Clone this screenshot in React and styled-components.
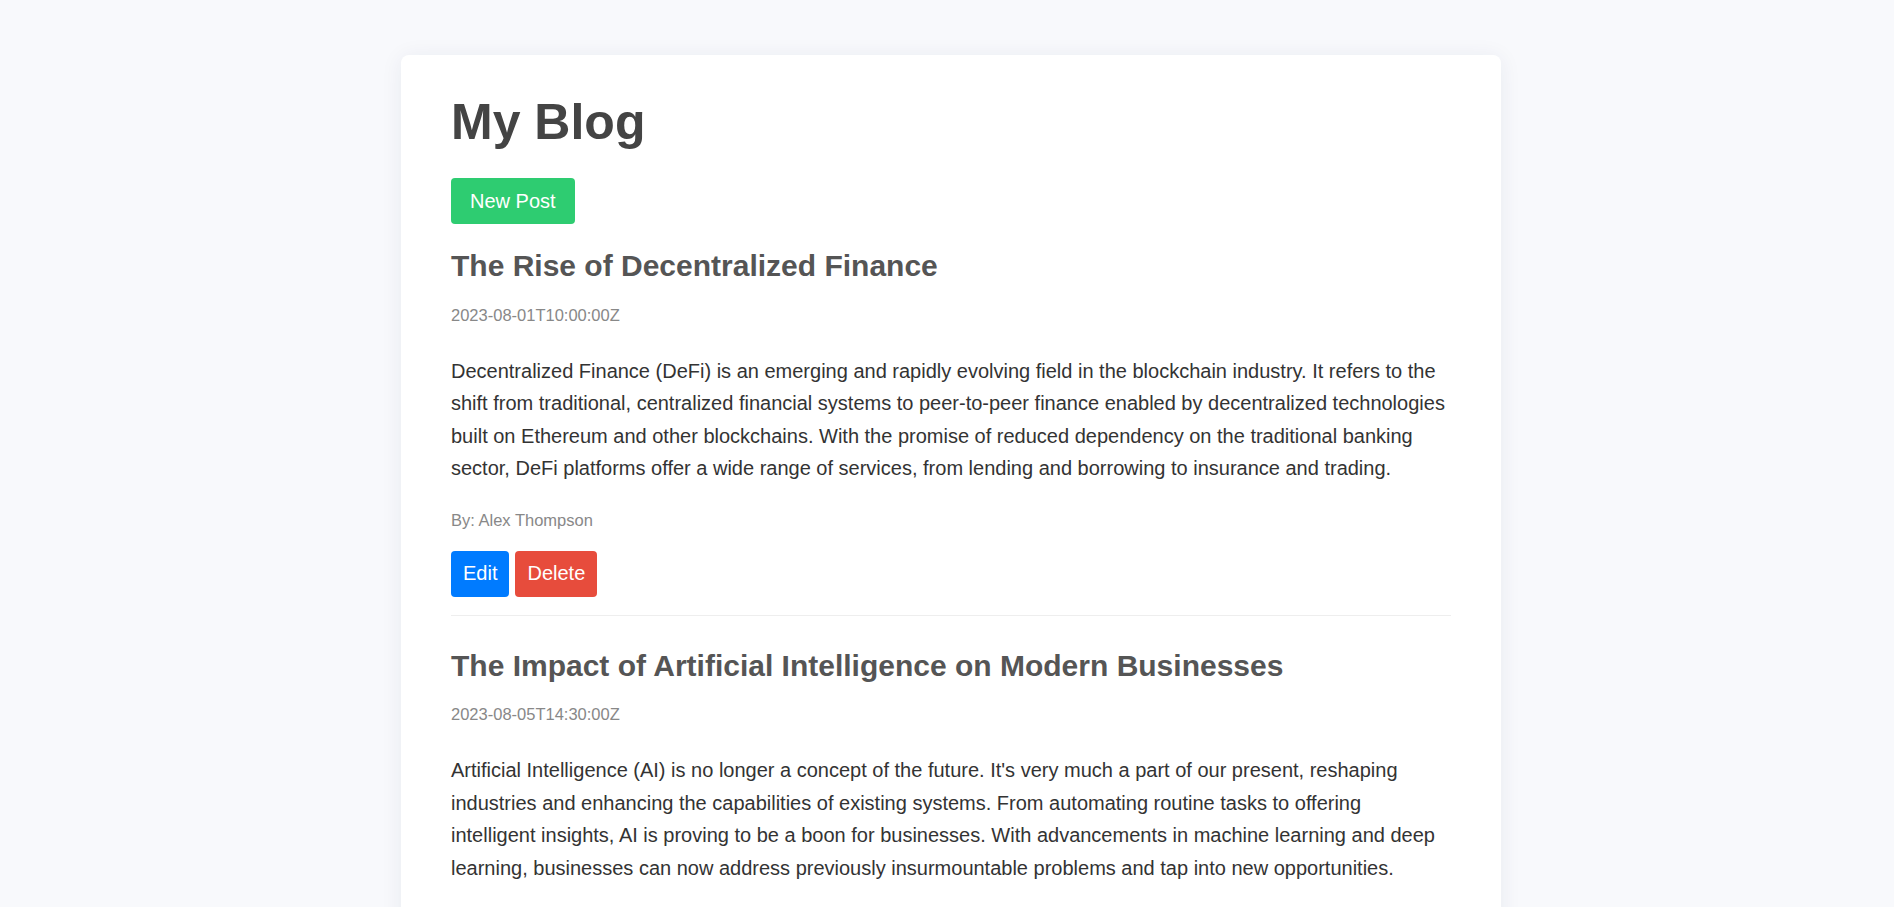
import React from "react"
import styled, { createGlobalStyle } from "styled-components"

const posts = [
  {
    id: 1,
    title: "The Rise of Decentralized Finance",
    date: "2023-08-01T10:00:00Z",
    content:
      "Decentralized Finance (DeFi) is an emerging and rapidly evolving field in the blockchain industry. It refers to the shift from traditional, centralized financial systems to peer-to-peer finance enabled by decentralized technologies built on Ethereum and other blockchains. With the promise of reduced dependency on the traditional banking sector, DeFi platforms offer a wide range of services, from lending and borrowing to insurance and trading.",
    author: "Alex Thompson",
  },
  {
    id: 2,
    title: "The Impact of Artificial Intelligence on Modern Businesses",
    date: "2023-08-05T14:30:00Z",
    content:
      "Artificial Intelligence (AI) is no longer a concept of the future. It's very much a part of our present, reshaping industries and enhancing the capabilities of existing systems. From automating routine tasks to offering intelligent insights, AI is proving to be a boon for businesses. With advancements in machine learning and deep learning, businesses can now address previously insurmountable problems and tap into new opportunities.",
    author: "Samantha Lee",
  },
]

function App() {
  return (
    <>
      <GlobalStyle />
      <Page>
        <Card>
          <Title>My Blog</Title>
          <Button color="#2ecc71" wide>New Post</Button>

          {posts.map((post) => (
            <Post key={post.id}>
              <PostTitle>{post.title}</PostTitle>
              <Meta>{post.date}</Meta>
              <Content>{post.content}</Content>
              <Author>By: {post.author}</Author>
              <Actions>
                <Button color="#007bff">Edit</Button>
                <Button color="#e74c3c">Delete</Button>
              </Actions>
            </Post>
          ))}
        </Card>
      </Page>
    </>
  )
}

export default App

const GlobalStyle = createGlobalStyle`
  body {
    margin: 0;
    background-color: #f8f9fc;
    font-family: "Liberation Sans", Arial, sans-serif;
  }
`

const Page = styled.div`
  padding: 55px 0 55px 8px;
`

const Card = styled.div`
  width: 1100px;
  box-sizing: border-box;
  margin: 0 auto;
  padding: 38px 50px 40px;
  background-color: #fff;
  border-radius: 8px;
  box-shadow: 0 2px 22px rgba(30, 40, 90, 0.07);
`

const Title = styled.h1`
  margin: 0 0 27px;
  font-size: 50px;
  font-weight: bold;
  color: #444;
`

const Button = styled.button`
  display: inline-block;
  padding: ${(p) => (p.wide ? "11.5px 19px" : "11.5px 12px")};
  margin: ${(p) => (p.wide ? "0 0 25px" : "0")};
  border: none;
  border-radius: 4px;
  background-color: ${(p) => p.color};
  color: #fff;
  font-family: inherit;
  font-size: 20px;
  cursor: pointer;
`

const Post = styled.div`
  padding-bottom: 18px;
  margin-bottom: 33px;
  border-bottom: 1px solid #eee;
`

const PostTitle = styled.h2`
  margin: 0 0 22.5px;
  font-size: 30px;
  font-weight: bold;
  color: #555;
`

const Meta = styled.p`
  margin: 0 0 30px;
  font-size: 16.5px;
  color: #888;
`

const Content = styled.p`
  margin: 0 0 26px;
  font-size: 20px;
  line-height: 32.5px;
  color: #333;
`

const Author = styled.p`
  margin: 0 0 21px;
  font-size: 16.5px;
  color: #888;
`

const Actions = styled.div`
  display: flex;
  gap: 6px;
`
